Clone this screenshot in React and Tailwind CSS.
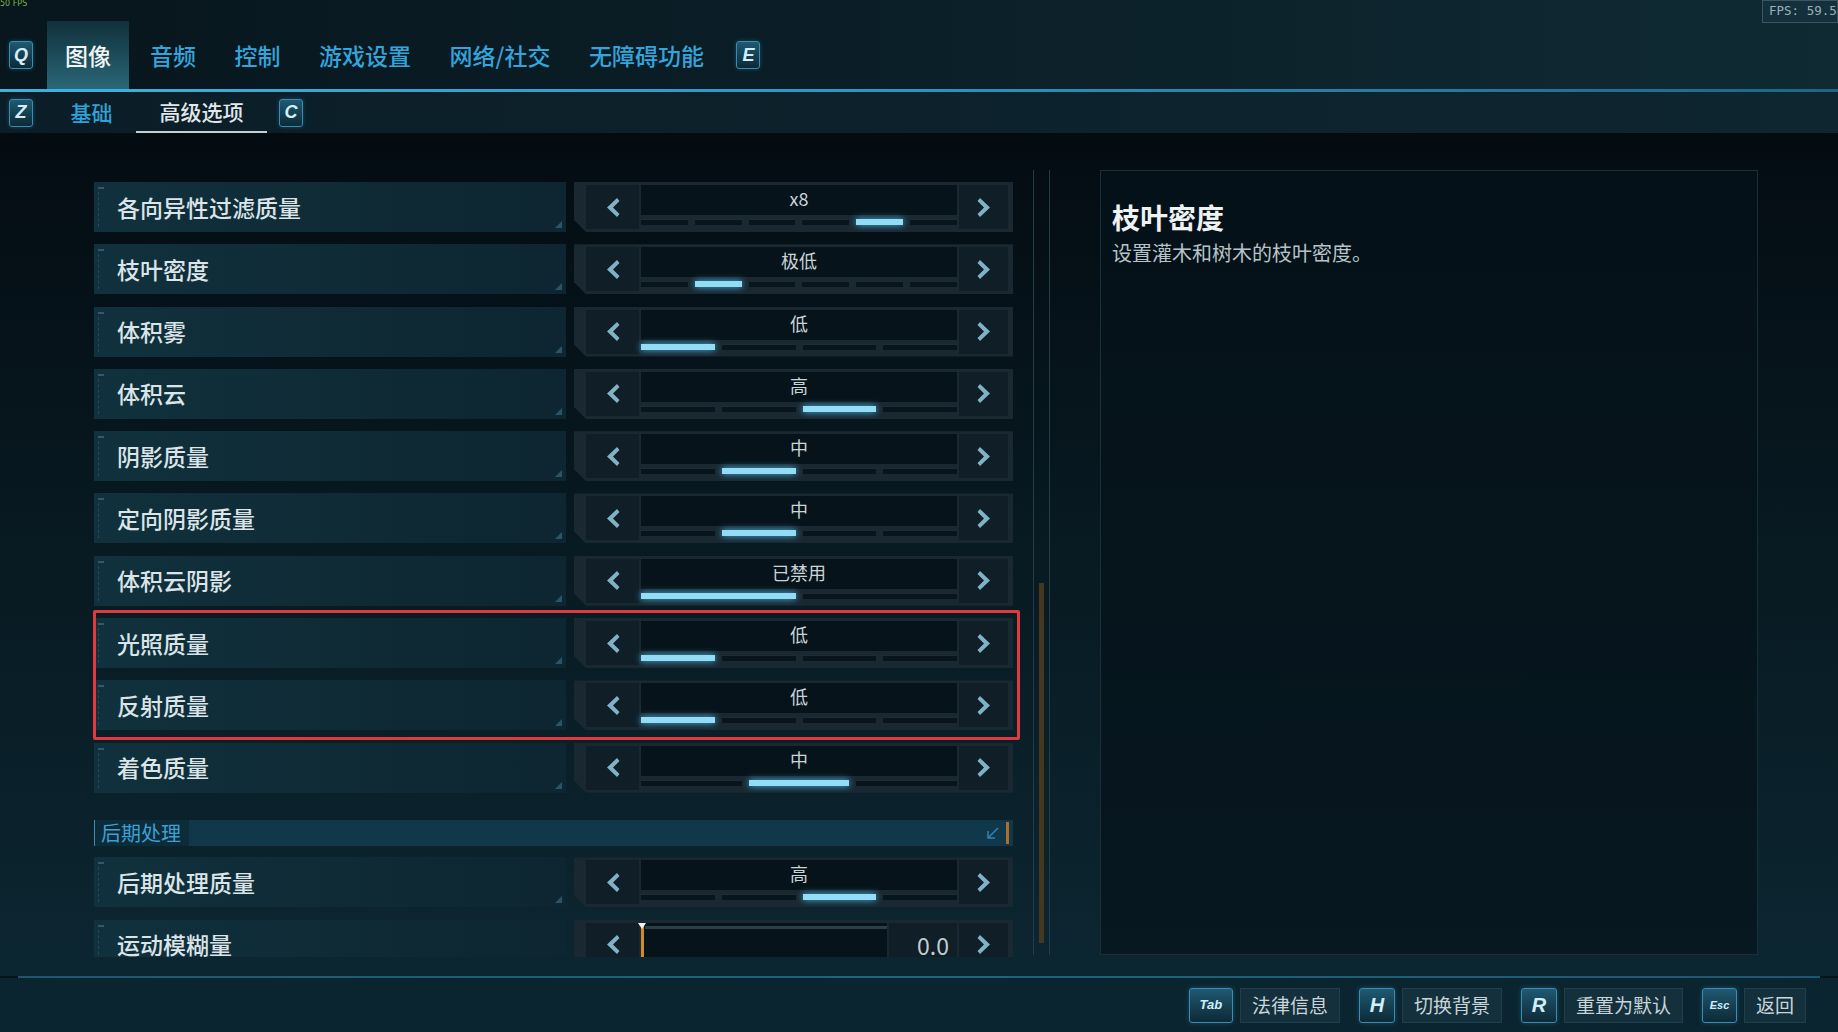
import React from 'react';

const rows = [
	{ label: '各向异性过滤质量', value: 'x8', segs: 6, active: 4 },
	{ label: '枝叶密度', value: '极低', segs: 6, active: 1 },
	{ label: '体积雾', value: '低', segs: 4, active: 0 },
	{ label: '体积云', value: '高', segs: 4, active: 2 },
	{ label: '阴影质量', value: '中', segs: 4, active: 1 },
	{ label: '定向阴影质量', value: '中', segs: 4, active: 1 },
	{ label: '体积云阴影', value: '已禁用', segs: 2, active: 0 },
	{ label: '光照质量', value: '低', segs: 4, active: 0 },
	{ label: '反射质量', value: '低', segs: 4, active: 0 },
	{ label: '着色质量', value: '中', segs: 3, active: 1 },
];

const topTabs = ['音频', '控制', '游戏设置', '网络/社交', '无障碍功能'];

function Key({ k, className = 'w-[24px] h-[28px] text-[18px]' }) {
	return (
		<div className={`${className} shrink-0 flex items-center justify-center rounded-[3px] border border-[#3a8db0] bg-gradient-to-b from-[#1f5a72] to-[#0d2a37] text-[#d3eef9] font-['Liberation_Sans',sans-serif] font-bold italic shadow-[0_0_4px_rgba(40,140,190,0.4)]`}>
			{k}
		</div>
	);
}

function Chevron({ dir }) {
	return (
		<svg width="16" height="21" viewBox="0 0 16 21">
			{dir === 'left' ? (
				<path d="M12 1 L2 10.5 L12 20 L14.5 17 L8 10.5 L14.5 4 Z" fill="#80b2c6" />
			) : (
				<path d="M4 1 L14 10.5 L4 20 L1.5 17 L8 10.5 L1.5 4 Z" fill="#80b2c6" />
			)}
		</svg>
	);
}

function LabelBox({ label }) {
	return (
		<div className="w-[472px] h-[50px] relative flex items-center bg-gradient-to-r from-[#10313d] via-[#0f2b36] to-[#0d2631]">
			<div className="ml-[4px] h-[40px] flex flex-col">
				<div className="w-[6px] h-[2px] bg-[#35586a]"></div>
				<div className="mt-[3px] w-[3px] flex-1 border-l border-dashed border-[#28485a]"></div>
			</div>
			<span className="ml-[13px] text-[23px] leading-none text-[#dbe4e8] font-medium">{label}</span>
			<div className="absolute right-[4px] bottom-[4px] w-0 h-0 border-l-[7px] border-l-transparent border-b-[7px] border-b-[#2a5568]"></div>
		</div>
	);
}

function Control({ children }) {
	return (
		<div className="w-[439px] h-[50px] bg-[#1a2831] flex items-stretch pl-[12px] pr-[5px] py-[3px] gap-[2px] [clip-path:polygon(0_0,100%_0,100%_100%,12px_100%,0_calc(100%-12px))]">
			<div className="w-[53px] bg-[#101e27] flex items-center justify-center">
				<Chevron dir="left" />
			</div>
			<div className="w-[316px] flex flex-col">{children}</div>
			<div className="w-[49px] bg-[#101e27] flex items-center justify-center">
				<Chevron dir="right" />
			</div>
		</div>
	);
}

function SettingRow({ row }) {
	const segs = Array.from({ length: row.segs }, (_, i) => i);
	return (
		<div className="flex items-center gap-[8px] mb-[12.3px] shrink-0">
			<LabelBox label={row.label} />
			<Control>
				<div className="h-[30px] bg-[#07131a] flex items-center justify-center text-[18px] leading-none text-[#c9d4d9] pb-[4px]">{row.value}</div>
				<div className="flex-1 flex items-center gap-[7px]">
					{segs.map((i) => (
						<div
							key={i}
							className={`flex-1 h-[6px] ${i === row.active ? 'bg-[#92dcf6] shadow-[0_0_7px_#45b8e8]' : 'bg-[#08151c] border-t border-[#1e2c34]'}`}
						></div>
					))}
				</div>
			</Control>
		</div>
	);
}

function FootButton({ k, keyClass, label }) {
	return (
		<div className="flex items-center gap-[7px]">
			<Key k={k} className={keyClass} />
			<div className="h-[35px] px-[11px] flex items-center bg-[#13303c] border border-[#1f3f4d] text-[19px] text-[#c9d5da]">{label}</div>
		</div>
	);
}

export default function App() {
	return (
		<div className="w-[1838px] h-[1032px] relative overflow-hidden flex flex-col bg-[#07141b] font-['Noto_Sans_CJK_SC','Noto_Sans',sans-serif]">
			{/* top tabs */}
			<div className="h-[89px] shrink-0 flex items-stretch pt-[21px] bg-gradient-to-r from-[#08161d] via-[#0b1f28] to-[#0f2a33]">
				<div className="w-[47px] flex items-center pl-[9px]">
					<Key k="Q" />
				</div>
				<div className="w-[82px] flex items-center justify-center bg-gradient-to-b from-[#11303b] via-[#1c4b59] to-[#2b6879] text-[23px] text-[#f1f5f6] font-medium">图像</div>
				<div className="flex items-center ml-[21px] gap-[38.5px]">
					{topTabs.map((t) => (
						<span key={t} className="text-[23px] text-[#33a5dc] font-medium">{t}</span>
					))}
					<div className="ml-[-6px]">
						<Key k="E" />
					</div>
				</div>
			</div>
			<div className="h-[3px] shrink-0 bg-gradient-to-r from-[#3fb2e2] via-[#2d93c2] to-[#1c6785]"></div>

			{/* sub tabs */}
			<div className="h-[41px] shrink-0 flex items-stretch bg-gradient-to-r from-[#0b1e27] to-[#0e2630]">
				<div className="w-[47px] flex items-center pl-[9px]">
					<Key k="Z" />
				</div>
				<div className="w-[89px] flex items-center justify-center text-[21px] text-[#2ea2da] font-medium">基础</div>
				<div className="w-[131px] flex items-center justify-center text-[21px] text-[#e1e8eb] font-medium border-b-2 border-[#c5d0d5]">高级选项</div>
				<div className="ml-[12px] flex items-center">
					<Key k="C" />
				</div>
			</div>

			{/* main */}
			<div className="h-[843px] shrink-0 flex items-start pt-[37px] bg-gradient-to-b from-[#040c12] via-[#081a22] to-[#0c2631]">
				<div className="ml-[94px] w-[919px] h-[787px] overflow-hidden pt-[12px] flex flex-col">
					{rows.map((r) => (
						<SettingRow key={r.label} row={r} />
					))}
					<div className="mt-[15.5px] mb-[11px] w-[919px] h-[26px] shrink-0 flex items-stretch bg-[#0c2c3a] border-l border-[#3a8fb5]">
						<span className="pl-[6px] pr-[8px] flex items-center text-[20px] text-[#3ea0d2]">后期处理</span>
						<div className="flex-1 bg-[#10374a] flex items-center justify-end pr-[4px] gap-[6px]">
							<svg width="14" height="14" viewBox="0 0 14 14">
								<path d="M12 2 L2 12 M2 5 L2 12 L9 12" stroke="#2f82b5" strokeWidth="1.5" fill="none" />
							</svg>
							<div className="w-[3px] h-[22px] bg-[#b06e2c]"></div>
						</div>
					</div>
					<SettingRow row={{ label: '后期处理质量', value: '高', segs: 4, active: 2 }} />
					<div className="flex items-center gap-[8px] shrink-0">
						<LabelBox label="运动模糊量" />
						<div className="w-[439px] h-[50px] bg-[#1a2831] flex items-stretch pl-[12px] pr-[5px] py-[3px] gap-[2px]">
							<div className="w-[53px] bg-[#101e27] flex items-center justify-center">
								<Chevron dir="left" />
							</div>
							<div className="w-[246px] relative bg-[#07131a] flex flex-col">
								<div className="mt-[3px] ml-[4px] h-[3px] bg-[#2b3f49]"></div>
								<div className="absolute left-0 top-0 w-[3px] h-full bg-[#d08a2a]"></div>
								<div className="absolute left-[-3px] top-0 w-0 h-0 border-l-[4.5px] border-r-[4.5px] border-t-[6px] border-l-transparent border-r-transparent border-t-[#f2f2f2]"></div>
							</div>
							<div className="w-[68px] bg-[#101e27] flex items-center justify-end pr-[8px] text-[23px] text-[#c2ced3]">0.0</div>
							<div className="w-[49px] bg-[#101e27] flex items-center justify-center">
								<Chevron dir="right" />
							</div>
						</div>
					</div>
				</div>

				{/* scrollbar */}
				<div className="ml-[20px] w-[17px] h-[785px] relative border-x border-[#243c47]">
					<div className="absolute left-[5px] top-[413px] w-[5px] h-[360px] bg-[#47371f]"></div>
				</div>

				{/* description panel */}
				<div className="ml-[50px] w-[658px] h-[785px] border border-[#19303a] bg-[#061319]/70 pl-[11px] pt-[28px]">
					<div className="text-[28px] leading-[36px] font-bold text-[#eef2f3]">枝叶密度</div>
					<div className="mt-[6px] text-[20px] leading-[24px] text-[#b6c4c9]">设置灌木和树木的枝叶密度。</div>
				</div>
			</div>

			{/* bottom line */}
			<div className="mx-[18px] h-[2px] shrink-0 bg-gradient-to-r from-[#1b5870] via-[#1f6580] to-[#1b5870]"></div>

			{/* footer */}
			<div className="flex-1 flex items-center justify-end pr-[32px] gap-[19px] bg-[#0b2530]">
				<FootButton k="Tab" keyClass="w-[44px] h-[35px] text-[13px]" label="法律信息" />
				<FootButton k="H" keyClass="w-[36px] h-[35px] text-[20px]" label="切换背景" />
				<FootButton k="R" keyClass="w-[36px] h-[35px] text-[20px]" label="重置为默认" />
				<FootButton k="Esc" keyClass="w-[35px] h-[35px] text-[11px]" label="返回" />
			</div>

			{/* overlays */}
			<div className="absolute left-0 top-0 text-[8px] leading-none text-[#7fae45] font-['DejaVu_Sans',sans-serif]">50 FPS</div>
			<div className="absolute right-0 top-0 w-[76px] h-[23px] pl-[6px] flex items-center overflow-hidden whitespace-nowrap border border-[#3b5561] bg-[#15303d] text-[12.5px] text-[#9ab0b8] font-['DejaVu_Sans_Mono',monospace]">FPS: 59.5</div>
			<div className="absolute left-[93px] top-[610px] w-[927px] h-[130px] border-[3px] border-[#e03a40] rounded-[2px]"></div>
		</div>
	);
}
